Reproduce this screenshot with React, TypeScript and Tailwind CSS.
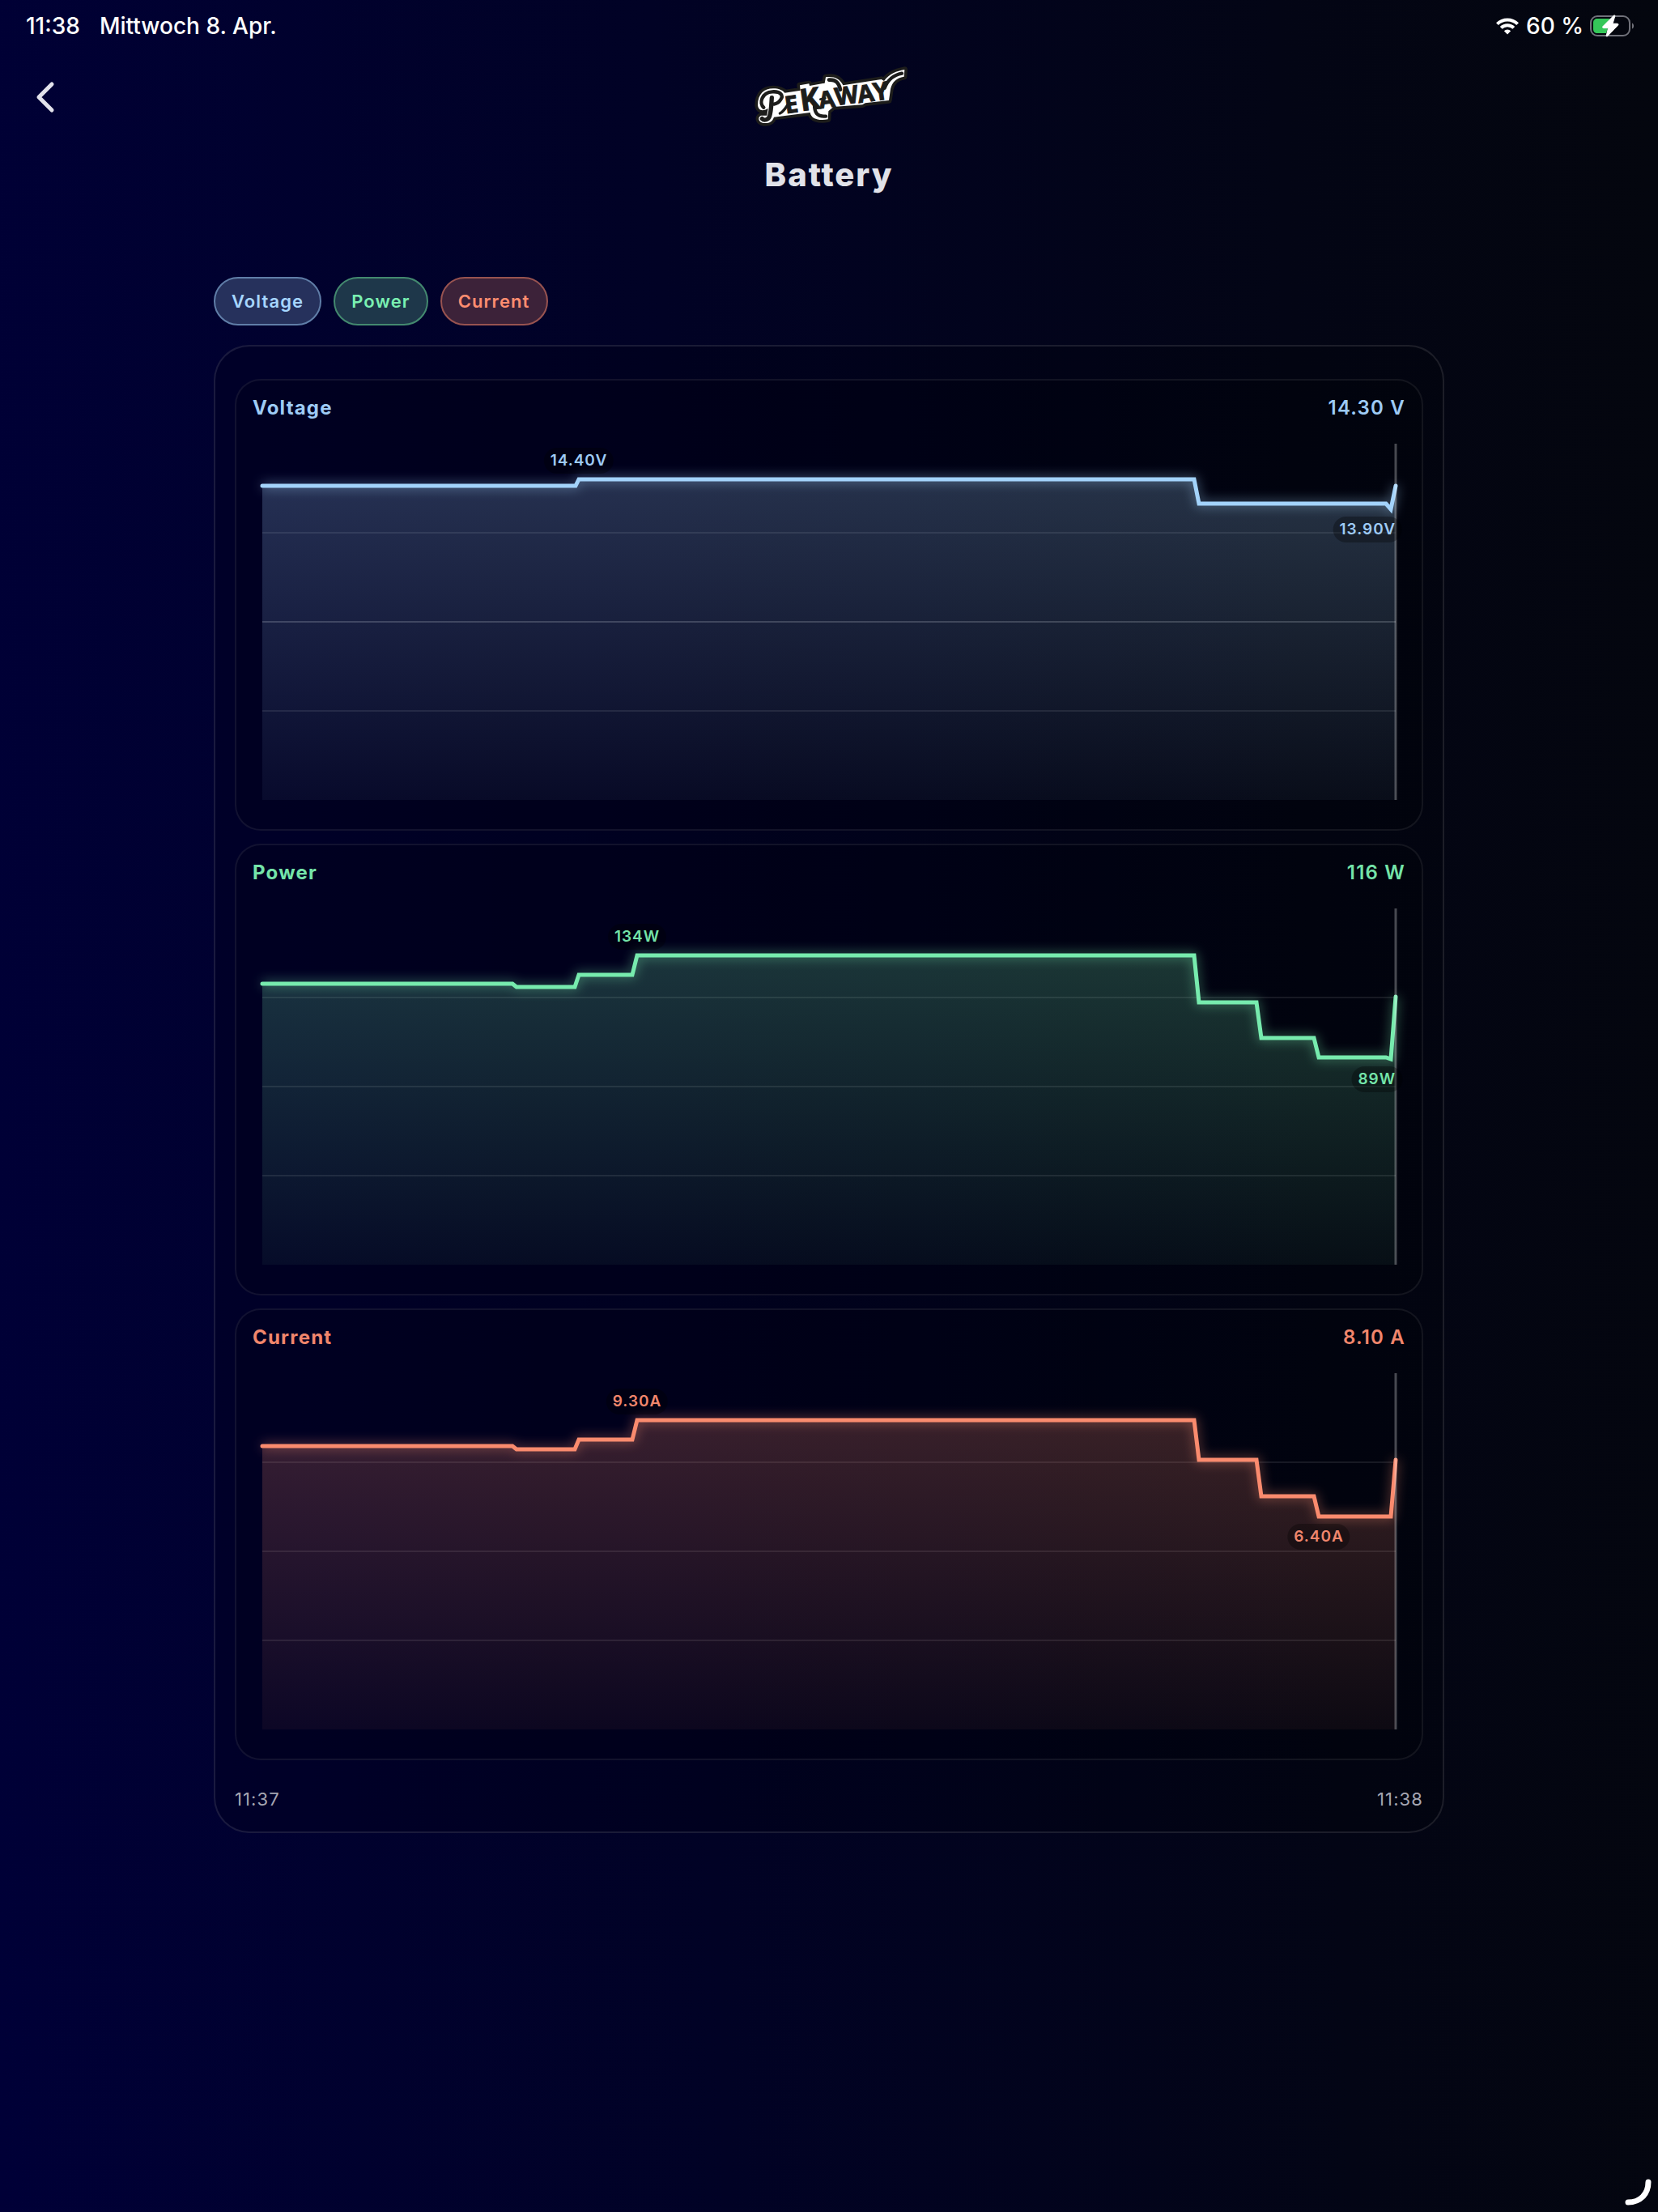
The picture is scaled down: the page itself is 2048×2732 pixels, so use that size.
import React from "react";

interface Peak {
  text: string;
  x: number;
  y: number;
  side: "top" | "bottom";
  alignRight?: boolean;
}

interface Series {
  id: string;
  name: string;
  value: string;
  color: string;
  textClass: string;
  pillClass: string;
  points: number[][];
  peaks: Peak[];
  brightMid?: boolean;
}

const CHART_W = 1400;
const CHART_H = 440;

const series: Series[] = [
  {
    id: "voltage",
    name: "Voltage",
    value: "14.30 V",
    color: "#a3d3fb",
    textClass: "text-[#9ecbf5]",
    pillClass: "border-[#607ea8] bg-[#26315c] text-[#a6d6ff]",
    points: [
      [0, 52], [387, 52], [391, 44], [1151, 44], [1157, 74],
      [1388, 74], [1394, 81], [1400, 52],
    ],
    peaks: [
      { text: "14.40V", x: 391, y: 44, side: "top" },
      { text: "13.90V", x: 1400, y: 81, side: "bottom", alignRight: true },
    ],
    brightMid: true,
  },
  {
    id: "power",
    name: "Power",
    value: "116 W",
    color: "#77ebae",
    textClass: "text-[#74e4a9]",
    pillClass: "border-[#43896f] bg-[#1e374a] text-[#7af0b2]",
    points: [
      [0, 93], [309, 93], [314, 97], [386, 97], [391, 82], [457, 82],
      [463, 58], [1151, 58], [1157, 116], [1228, 116], [1234, 160],
      [1299, 160], [1305, 184], [1388, 184], [1394, 186], [1400, 109],
    ],
    peaks: [
      { text: "134W", x: 463, y: 58, side: "top" },
      { text: "89W", x: 1400, y: 186, side: "bottom", alignRight: true },
    ],
  },
  {
    id: "current",
    name: "Current",
    value: "8.10 A",
    color: "#fa8b6e",
    textClass: "text-[#f1866c]",
    pillClass: "border-[#985350] bg-[#3c2239] text-[#ff8d70]",
    points: [
      [0, 90], [309, 90], [314, 94], [386, 94], [391, 82], [457, 82],
      [463, 58], [1151, 58], [1157, 107], [1228, 107], [1234, 152],
      [1299, 152], [1305, 177], [1394, 177], [1400, 107],
    ],
    peaks: [
      { text: "9.30A", x: 463, y: 58, side: "top" },
      { text: "6.40A", x: 1305, y: 177, side: "bottom" },
    ],
  },
];

const StatusBar = () => (
  <div className="flex h-16 items-center justify-between pl-8 pr-7 text-[28px] font-medium leading-8 text-white">
    <div className="flex gap-6">
      <span>11:38</span>
      <span>Mittwoch 8. Apr.</span>
    </div>
    <div className="flex items-center gap-2">
      <svg width="30" height="22" viewBox="0 0 30 22" fill="none">
        <path d="M2.4 8.6a18 18 0 0 1 25.2 0" stroke="#fff" strokeWidth="4" />
        <path d="M7.2 13.4a11.2 11.2 0 0 1 15.6 0" stroke="#fff" strokeWidth="4" />
        <path d="M15 21.6l-4.2-4.3a6 6 0 0 1 8.4 0z" fill="#fff" />
      </svg>
      <span>60 %</span>
      <svg width="56" height="28" viewBox="0 0 56 28" fill="none">
        <rect x="1" y="2" width="48" height="24" rx="8" stroke="#70717a" strokeWidth="2" />
        <path d="M52 10.5c2.8 1 2.8 6 0 7z" fill="#70717a" />
        <path d="M9 5h16l-7 9c-1 2 0 3 1 3h3l-2 6H9c-3 0-5-2-5-5v-8c0-3 2-5 5-5z" fill="#35c759" />
        <path
          d="M29.5 1L16 14.6c-.9 1-.6 2 .8 2h5.8L20.2 26c-.2 1.2.7 1.4 1.5.6L34.5 13.2c.9-1 .5-2-.8-2H28L30.8 2c.2-1-.6-1.6-1.3-1z"
          fill="#fff"
          stroke="#fff"
          strokeWidth="1"
        />
      </svg>
    </div>
  </div>
);

const logoLetters = [
  { ch: "E", x: 212, y: 241, size: 88 },
  { ch: "K", x: 269, y: 232, size: 112 },
  { ch: "A", x: 338, y: 223, size: 86 },
  { ch: "W", x: 398, y: 211, size: 90 },
  { ch: "A", x: 482, y: 202, size: 88 },
  { ch: "Y", x: 540, y: 194, size: 92 },
];

const logoShape =
  "M108 210C108 168 132 148 165 148C186 148 200 154 208 164L266 155L264 136L298 130L300 138L356 128L360 106C388 102 412 110 424 136L566 114L576 120C596 92 622 84 652 78L650 104C622 108 606 124 600 150L594 192L506 202L496 208L388 216L370 232L368 262C336 268 306 262 302 237L168 254C162 272 148 278 130 276C110 274 106 254 120 248L142 248L146 222C122 236 110 226 108 210Z";

const Logo = () => (
  <svg className="h-20 w-[200px]" viewBox="72 54 600 240" role="img" aria-label="Pekaway">
    <path d={logoShape} fill="#1d1d1b" stroke="#1d1d1b" strokeWidth="22" strokeLinejoin="round" />
    <path d={logoShape} fill="#fff" />
    <g
      fill="#1d1d1b"
      stroke="#1d1d1b"
      strokeWidth="3"
      fontFamily="'Open Sans', sans-serif"
      fontWeight="700"
    >
      {logoLetters.map((l, i) => (
        <text key={i} fontSize={l.size} transform={`translate(${l.x} ${l.y}) rotate(-8)`}>
          {l.ch}
        </text>
      ))}
    </g>
    <g fill="none" stroke="#1d1d1b" strokeLinecap="round" strokeLinejoin="round">
      <path d="M160 182C158 210 158 230 152 250C148 264 132 268 124 260" strokeWidth="16" />
      <path d="M130 218C112 204 122 162 162 160C196 158 204 176 192 190C186 200 176 204 168 206" strokeWidth="13" />
      <path d="M190 240C204 234 212 218 222 204" strokeWidth="10" />
      <path d="M318 206C318 236 326 252 360 251" strokeWidth="13" />
      <path d="M372 116C396 114 408 124 414 152" strokeWidth="14" />
      <path d="M340 188L358 184" strokeWidth="8" />
      <path d="M578 146C592 112 612 98 642 92" strokeWidth="13" />
    </g>
  </svg>
);

const LineChart = ({ data }: { data: Series }) => {
  const line = "M" + data.points.map((p) => p.join(" ")).join("L");

  return (
    <div className="relative">
      <svg className="block h-auto w-full overflow-visible" viewBox={`0 0 ${CHART_W} ${CHART_H}`} fill="none">
        <defs>
          <linearGradient id={`${data.id}-fill`} x1="0" y1="0" x2="0" y2={CHART_H} gradientUnits="userSpaceOnUse">
            <stop offset="0" stopColor={data.color} stopOpacity="0.25" />
            <stop offset="1" stopColor={data.color} stopOpacity="0.05" />
          </linearGradient>
          <filter id={`${data.id}-glow`} x="-40" y="-40" width="1480" height="520" filterUnits="userSpaceOnUse">
            <feGaussianBlur stdDeviation="7" />
          </filter>
        </defs>
        {[110, 220, 330].map((y) => (
          <path
            key={y}
            d={`M0 ${y}H${CHART_W}`}
            stroke="#fff"
            strokeOpacity={data.brightMid && y === 220 ? 0.18 : 0.09}
            strokeWidth="2"
          />
        ))}
        <path d={`${line}V${CHART_H}H0Z`} fill={`url(#${data.id}-fill)`} />
        <path d={line} stroke={data.color} strokeOpacity="0.5" strokeWidth="6" filter={`url(#${data.id}-glow)`} />
        <path d={line} stroke={data.color} strokeWidth="5" strokeLinecap="round" />
        <path d={`M${CHART_W} 0V${CHART_H}`} stroke="#fff" strokeOpacity="0.28" strokeWidth="3" />
      </svg>
      {data.peaks.map((peak) => (
        <span
          key={peak.text}
          className={`absolute rounded-full bg-black/30 px-2 text-[19px] font-semibold leading-8 tracking-wider ${data.textClass} ${
            peak.alignRight ? "translate-x-[calc(-100%+8px)]" : "-translate-x-1/2"
          } ${peak.side === "top" ? "-mt-[39px]" : "mt-[9px]"}`}
          style={{
            left: `${(peak.x / CHART_W) * 100}%`,
            top: `${(peak.y / CHART_H) * 100}%`,
          }}
        >
          {peak.text}
        </span>
      ))}
    </div>
  );
};

const ChartCard = ({ data }: { data: Series }) => (
  <section className="rounded-[32px] border-2 border-white/7 bg-black/15 px-5 pb-9 pt-[18px]">
    <div className={`flex justify-between text-2xl leading-8 tracking-wider ${data.textClass}`}>
      <h2 className="font-bold">{data.name}</h2>
      <span className="font-semibold">{data.value}</span>
    </div>
    <div className="px-3 pt-7">
      <LineChart data={data} />
    </div>
  </section>
);

export default function App() {
  return (
    <div className="relative min-h-screen bg-[linear-gradient(88deg,#000037_0%,#010225_42%,#030515_78%,#04060e_100%)] font-['Inter',sans-serif]">
      <StatusBar />
      <header className="grid grid-cols-[1fr_auto_1fr] items-start px-9 pt-3.5">
        <button type="button" aria-label="Back" className="mt-[18px] w-10">
          <svg width="40" height="48" viewBox="0 0 40 48" fill="none">
            <path d="M28 8L12 24l16 16" stroke="#e2e2eb" strokeWidth="5" strokeLinecap="round" strokeLinejoin="round" />
          </svg>
        </button>
        <div className="flex flex-col items-center">
          <Logo />
          <h1 className="mt-8 text-[40px] font-extrabold leading-[52px] tracking-wider text-[#e1e2e9]">Battery</h1>
        </div>
      </header>

      <main className="mx-auto w-full max-w-[1520px] pt-[100px]">
        <div className="flex gap-[15px]">
          {series.map((s) => (
            <button
              key={s.id}
              type="button"
              className={`h-[60px] rounded-full border-2 px-5 text-[22px] font-semibold leading-7 tracking-wider ${s.pillClass}`}
            >
              {s.name}
            </button>
          ))}
        </div>

        <div className="mt-6 rounded-[44px] border-2 border-white/10 bg-black/15 px-6 pb-[26px] pt-10">
          <div className="flex flex-col gap-4">
            {series.map((s) => (
              <ChartCard key={s.id} data={s} />
            ))}
          </div>
          <div className="mt-[34px] flex justify-between text-[22px] leading-7 tracking-wider text-[#a5a5b2]">
            <span>11:37</span>
            <span>11:38</span>
          </div>
        </div>
      </main>

      {/* corner handle */}
      <svg className="absolute bottom-2 right-2 size-9" viewBox="0 0 36 36" fill="none">
        <path d="M32 7C32 22 22 32 7 32" stroke="#fff" strokeWidth="7" strokeLinecap="round" />
      </svg>
    </div>
  );
}
